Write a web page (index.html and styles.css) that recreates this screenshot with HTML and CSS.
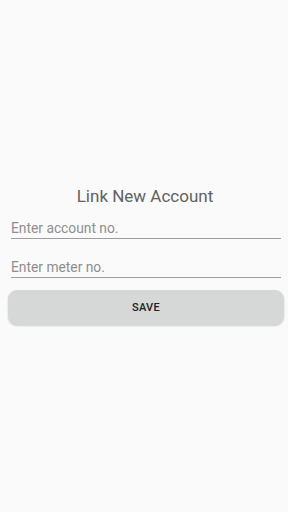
FILE: index.html
```html
<!DOCTYPE html>
<html>
<head>
<meta charset="utf-8">
<link rel="stylesheet" href="styles.css">
</head>
<body>
<div class="screen">
  <div class="form">
    <div class="title">Link New Account</div>
    <div class="field"><span class="hint">Enter account no.</span></div>
    <div class="field second"><span class="hint">Enter meter no.</span></div>
    <div class="btn">SAVE</div>
  </div>
</div>
</body>
</html>
```
FILE: styles.css
```css
html, body { margin: 0; padding: 0; background: #fafafa; }
body { font-family: Roboto, "Noto Sans", sans-serif; }
.screen { height: 512px; display: flex; flex-direction: column; justify-content: flex-start; }
.form { padding: 185px 4px 0 8px; display: flex; flex-direction: column; }
.title { text-align: center; font-size: 17px; color: #616161; line-height: 22px; margin-right: 2px; }
.field { margin: 7px 3px 0 3px; border-bottom: 1.5px solid #9e9e9e; height: 25px; display: flex; align-items: flex-end; padding-bottom: 1px; box-sizing: border-box; }
.field.second { margin-top: 14px; }
.hint { font-size: 13.8px; color: #8e8e8e; line-height: 18px; }
.btn { margin-top: 12px; height: 35px; border-radius: 9px; background: #d6d7d7; box-shadow: 0 1px 2px rgba(0,0,0,0.18); display: flex; align-items: center; justify-content: center; font-size: 11px; font-weight: 500; color: #222; letter-spacing: 0.3px; }
```
